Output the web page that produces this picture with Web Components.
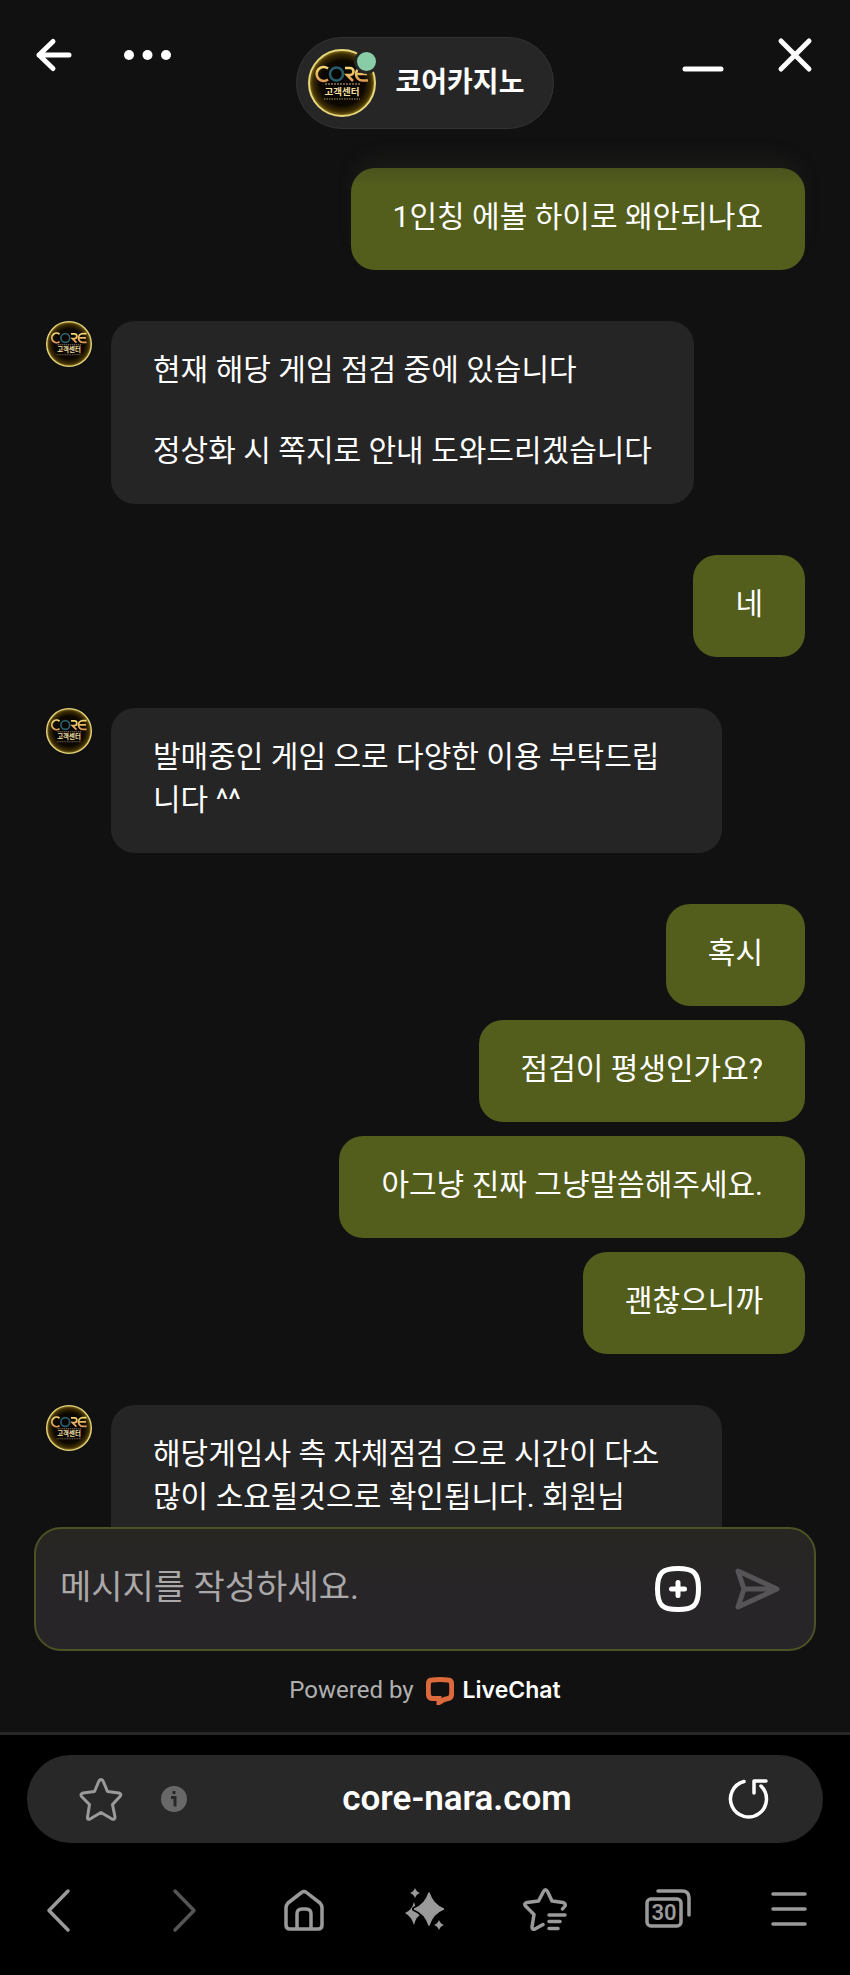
<!DOCTYPE html>
<html lang="ko">
<head>
<meta charset="utf-8">
<meta name="viewport" content="width=device-width, initial-scale=1">
<title>코어카지노</title>
<style>
    html, body {
        margin: 0;
        height: 100%;
        background: #000;
    }
    body {
        font-family: Roboto, "Noto Sans CJK KR", sans-serif;
        color: #fff;
        display: flex;
        flex-direction: column;
    }
</style>
</head>
<body>
<chat-window>
    <chat-header slot="header">코어카지노</chat-header>
    <chat-group from="user">
        <chat-bubble from="user" glow>1인칭 에볼 하이로 왜안되나요</chat-bubble>
    </chat-group>
    <chat-group from="agent">
        <chat-bubble><p>현재 해당 게임 점검 중에 있습니다</p><p>정상화 시 쪽지로 안내 도와드리겠습니다</p></chat-bubble>
    </chat-group>
    <chat-group from="user">
        <chat-bubble from="user">네</chat-bubble>
    </chat-group>
    <chat-group from="agent">
        <chat-bubble>발매중인 게임 으로 다양한 이용 부탁드립니다 ^^</chat-bubble>
    </chat-group>
    <chat-group from="user">
        <chat-bubble from="user">혹시</chat-bubble>
        <chat-bubble from="user">점검이 평생인가요?</chat-bubble>
        <chat-bubble from="user">아그냥 진짜 그냥말씀해주세요.</chat-bubble>
        <chat-bubble from="user">괜찮으니까</chat-bubble>
    </chat-group>
    <chat-group from="agent">
        <chat-bubble>해당게임사 측 자체점검 으로 시간이 다소 많이 소요될것으로 확인됩니다. 회원님</chat-bubble>
    </chat-group>
    <chat-composer slot="footer"></chat-composer>
    <powered-by slot="footer"></powered-by>
</chat-window>
<browser-bar url="core-nara.com" tabs="30"></browser-bar>

<script>
const buttonStyle = `
    button {
        display: grid;
        place-items: center;
        padding: 0;
        border: 0;
        background: none;
        color: inherit;
        cursor: pointer;
    }
    svg {
        display: block;
        fill: none;
        stroke: currentColor;
        stroke-linecap: round;
        stroke-linejoin: round;
    }
`;

class ChatAvatar extends HTMLElement {
    constructor() {
        super();
        this.attachShadow({ mode: "open" });
        this.shadowRoot.innerHTML = `
            <style>
                :host {
                    display: block;
                    flex: none;
                    width: var(--avatar-size, 46px);
                    height: var(--avatar-size, 46px);
                }
                svg { display: block; width: 100%; height: 100%; }
                text { font-family: "Noto Sans CJK KR", sans-serif; font-weight: 700; }
            </style>
            <svg viewBox="0 0 68 68" role="img" aria-label="CORE 고객센터">
                <defs>
                    <radialGradient id="disc">
                        <stop offset="0" stop-color="#050300"/>
                        <stop offset=".68" stop-color="#0d0800"/>
                        <stop offset=".88" stop-color="#3d2d04"/>
                        <stop offset="1" stop-color="#8a741c"/>
                    </radialGradient>
                    <linearGradient id="gold" x1="0" y1="0" x2="0" y2="1">
                        <stop offset="0" stop-color="#f5d873"/>
                        <stop offset="1" stop-color="#df9c58"/>
                    </linearGradient>
                </defs>
                <circle cx="34" cy="34" r="33" fill="url(#disc)" stroke="#e6d67c" stroke-width="2"/>
                <g fill="none" stroke="url(#gold)" stroke-width="2.6">
                    <path d="M20 19.500a7 7 0 1 0 0 11"/>
                    <path d="M37 19h5a3.500 3.500 0 0 1 0 7h-3l6 6"/>
                    <path d="M60 18.500h-5.500a6.500 6.500 0 0 0 0 13H60M49 25h10"/>
                </g>
                <circle cx="28.500" cy="25" r="6.500" fill="none" stroke="#285c6b" stroke-width="2.600"/>
                <path d="M17 35h35" stroke="#8a7658" stroke-width="1.500" stroke-dasharray="2 1"/>
                <text x="34" y="46" font-size="9.500" text-anchor="middle" fill="#f1dfa2">고객센터</text>
                <path d="M16 50h36" stroke="#75684e" stroke-width="1.500" stroke-dasharray="1.500 1"/>
            </svg>
        `;
    }
}

class ChatHeader extends HTMLElement {
    constructor() {
        super();
        this.attachShadow({ mode: "open" });
        this.shadowRoot.innerHTML = `
            <style>
                ${buttonStyle}
                :host {
                    display: grid;
                    grid-template-columns: 1fr auto 1fr;
                    align-items: start;
                    padding: 37px 32px 0;
                }
                .side { display: flex; gap: 50px; }
                .side.end { justify-content: flex-end; }
                .side button { height: 36px; }
                .pill {
                    display: flex;
                    align-items: center;
                    gap: 20px;
                    height: 92px;
                    padding: 0 29px 0 11px;
                    box-sizing: border-box;
                    border: 1px solid #333;
                    border-radius: 46px;
                    background: #262626;
                    font-size: 28px;
                    font-weight: 700;
                    line-height: 40px;
                    --avatar-size: 68px;
                }
                .photo { position: relative; }
                .status {
                    position: absolute;
                    top: 0;
                    right: -3px;
                    width: 19px;
                    height: 19px;
                    border: 3px solid #262626;
                    border-radius: 50%;
                    background: #88cda6;
                }
            </style>
            <div class="side">
                <button aria-label="뒤로">
                    <svg width="42" height="36" stroke-width="5"><path d="M37 18H7M21 4.500L7 18l14 13.500"/></svg>
                </button>
                <button aria-label="메뉴">
                    <svg width="48" height="36"><g fill="#fff" stroke="none"><circle cx="5" cy="18" r="5"/><circle cx="23.500" cy="18" r="5"/><circle cx="42" cy="18" r="5"/></g></svg>
                </button>
            </div>
            <div class="pill">
                <div class="photo"><chat-avatar></chat-avatar><span class="status"></span></div>
                <slot></slot>
            </div>
            <div class="side end">
                <button aria-label="최소화">
                    <svg width="42" height="36" stroke-width="5"><path d="M3 32h36"/></svg>
                </button>
                <button aria-label="닫기">
                    <svg width="44" height="36" stroke-width="5"><path d="M7 4l28 28M35 4L7 32"/></svg>
                </button>
            </div>
        `;
    }
}

class ChatBubble extends HTMLElement {
    constructor() {
        super();
        this.attachShadow({ mode: "open" });
        this.shadowRoot.innerHTML = `
            <style>
                :host {
                    display: block;
                    box-sizing: border-box;
                    max-width: 611px;
                    padding: 27px 42px 32px;
                    border-radius: 24px;
                    background: #262526;
                    font-size: 30px;
                    line-height: 43px;
                }
                :host([from="user"]) { background: #535d1c; }
                :host([glow]) {
                    background: linear-gradient(#4a531d, #535d1c 18px);
                    box-shadow: 0 -16px 24px -8px rgba(83, 93, 60, .14);
                }
                slot {
                    display: flex;
                    flex-direction: column;
                    gap: 38px;
                }
                ::slotted(p) { margin: 0; }
            </style>
            <slot></slot>
        `;
    }
}

class ChatGroup extends HTMLElement {
    constructor() {
        super();
        this.attachShadow({ mode: "open" });
        const agent = this.getAttribute("from") === "agent";
        this.shadowRoot.innerHTML = `
            <style>
                :host {
                    display: flex;
                    gap: 19px;
                }
                .messages {
                    display: flex;
                    flex: 1;
                    flex-direction: column;
                    align-items: ${agent ? "flex-start" : "flex-end"};
                    gap: 14px;
                }
            </style>
            ${agent ? "<chat-avatar></chat-avatar>" : ""}
            <div class="messages"><slot></slot></div>
        `;
    }
}

class ChatWindow extends HTMLElement {
    constructor() {
        super();
        this.attachShadow({ mode: "open" });
        this.shadowRoot.innerHTML = `
            <style>
                :host {
                    display: flex;
                    flex: 1;
                    flex-direction: column;
                    min-height: 0;
                    background: #121112;
                    border-bottom: 3px solid #272727;
                }
                main {
                    display: flex;
                    flex: 1;
                    flex-direction: column;
                    gap: 51px;
                    min-height: 0;
                    overflow: hidden;
                    padding: 39px 45px 0 46px;
                }
                ::slotted(chat-group) { flex: none; }
            </style>
            <slot name="header"></slot>
            <main><slot></slot></main>
            <slot name="footer"></slot>
        `;
    }
}

class ChatComposer extends HTMLElement {
    constructor() {
        super();
        this.attachShadow({ mode: "open" });
        this.shadowRoot.innerHTML = `
            <style>
                ${buttonStyle}
                :host { display: block; padding: 0 34px; }
                form {
                    display: flex;
                    align-items: center;
                    gap: 34px;
                    height: 124px;
                    box-sizing: border-box;
                    padding: 0 34px 0 24px;
                    border: 2px solid #4c5224;
                    border-radius: 27px;
                    background: linear-gradient(#272622, #272527 50%);
                }
                input {
                    flex: 1;
                    min-width: 0;
                    padding: 0 0 4px;
                    border: 0;
                    outline: 0;
                    background: none;
                    color: #fff;
                    font: 34px/48px Roboto, "Noto Sans CJK KR", sans-serif;
                }
                input::placeholder { color: #aaa8a9; opacity: 1; }
                .send { color: #565456; }
            </style>
            <form>
                <input type="text" aria-label="메시지" placeholder="메시지를 작성하세요.">
                <button type="button" aria-label="첨부">
                    <svg width="46" height="46" stroke-width="5"><path d="M23 2.500c15 0 20.500 3.500 20.500 20.500S38 43.500 23 43.500 2.500 40 2.500 23 8 2.500 23 2.500z"/><path d="M23 16.500v13M16.500 23h13"/></svg>
                </button>
                <button type="button" class="send" aria-label="보내기">
                    <svg width="45" height="42" stroke-width="5"><path d="M3 3l39 18L3 39l6-18zM9 21h30"/></svg>
                </button>
            </form>
        `;
    }
}

class PoweredBy extends HTMLElement {
    constructor() {
        super();
        this.attachShadow({ mode: "open" });
        this.shadowRoot.innerHTML = `
            <style>
                :host {
                    display: flex;
                    align-items: center;
                    justify-content: center;
                    gap: 12px;
                    padding: 24px 0 26px;
                    font-family: Roboto, sans-serif;
                    font-size: 24px;
                    line-height: 31px;
                    color: #b0b0b0;
                }
                a {
                    display: flex;
                    align-items: center;
                    gap: 9px;
                    color: #fff;
                    font-family: Inter, sans-serif;
                    font-size: 23px;
                    font-weight: 600;
                    text-decoration: none;
                }
            </style>
            <span>Powered by</span>
            <a href="#">
                <svg width="28" height="28" fill="none" stroke="#dc693b" stroke-width="5"><path d="M6 3Q14 2 22 3Q25 3 25.500 6Q26 12 25.500 18Q25 21 22 21.500L18 22.500L13 25.500V21.500L6 21.500Q3 21 2.500 18Q2 12 2.500 6Q3 3 6 3z"/></svg>
                LiveChat
            </a>
        `;
    }
}

class BrowserBar extends HTMLElement {
    constructor() {
        super();
        this.attachShadow({ mode: "open" });
        const url = this.getAttribute("url");
        const tabs = this.getAttribute("tabs");
        this.shadowRoot.innerHTML = `
            <style>
                ${buttonStyle}
                :host {
                    display: block;
                    flex: none;
                    padding: 20px 0 40px;
                    background: #000;
                    color: #9a9a9a;
                }
                .address {
                    display: grid;
                    grid-template-columns: auto 1fr auto;
                    align-items: center;
                    height: 88px;
                    margin: 0 27px;
                    padding: 0 52px;
                    border-radius: 44px;
                    background: #282828;
                }
                .left { display: flex; align-items: center; gap: 38px; }
                .reload { color: #fff; }
                .url {
                    color: #fff;
                    font-size: 35px;
                    font-weight: 600;
                    line-height: 44px;
                    text-align: center;
                }
                nav {
                    display: grid;
                    grid-template-columns: repeat(7, 1fr);
                    margin-top: 44px;
                }
                nav button { height: 48px; }
                .off { color: #555; }
                text { font: 600 22px Roboto, sans-serif; fill: currentColor; stroke: none; }
            </style>
            <div class="address">
                <div class="left">
                    <button aria-label="북마크">
                        <svg width="44" height="44" stroke-width="3"><path d="M22 2.500Q23.500 2.500 24.500 5L28.500 14.500L40 16Q43 17 41 19.500L33.500 27.500L36 40Q36 43 33 42L22 35.500L11 42Q8 43 8.500 40L10.500 27.500L2.500 19.500Q1 17 4 16L15.500 14.500L19.500 5Q20.500 2.500 22 2.500z"/></svg>
                    </button>
                    <button aria-label="사이트 정보">
                        <svg width="26" height="26"><circle cx="13" cy="13" r="13" fill="#686868" stroke="none"/><path d="M10 11.500H14V20.500M11.500 6.500h3" stroke="#282828" stroke-width="3" stroke-linecap="butt" stroke-linejoin="miter"/></svg>
                    </button>
                </div>
                <span class="url">${url}</span>
                <button class="reload" aria-label="새로고침">
                    <svg width="44" height="42" stroke-width="3.500"><path d="M17 3.500A18 18 0 1 0 34 8M27 15V3h12"/></svg>
                </button>
            </div>
            <nav>
                <button aria-label="이전"><svg width="34" height="48" stroke-width="3.500"><path d="M24 4L5 23.500L24 43"/></svg></button>
                <button class="off" aria-label="다음"><svg width="34" height="48" stroke-width="3.500"><path d="M10 4l19 19.500L10 43"/></svg></button>
                <button aria-label="홈"><svg width="40" height="48" stroke-width="3.500"><path d="M17.500 5.500Q20 3.500 22.500 5.500L36 16Q38 18 38 21V38Q38 42 34 42H6Q2 42 2 38V21Q2 18 4 16zM13 42V27q0-5 5-5h4q5 0 5 5v15"/></svg></button>
                <button aria-label="AI"><svg width="42" height="48"><g fill="currentColor" stroke="none"><path d="M10 15q2 9 9 11q-7 3-9 12q-3-9-9-12q7-3 9-11z"/><path d="M25 6Q29 18 39.500 22Q29 26 25 38Q21 26 10.500 22Q21 18 25 6z" stroke="#000" stroke-width="5"/><path d="M25 6Q29 18 39.500 22Q29 26 25 38Q21 26 10.500 22Q21 18 25 6z" stroke="currentColor" stroke-width="1.500"/><path d="M11 1q1.500 4 5 5q-3.500 1-5 5q-1.500-4-5-5q3.500-1 5-5zM35 33q1.500 4 5 5q-3.500 1-5 5q-1.500-4-5-5q3.500-1 5-5z"/></g></svg></button>
                <button aria-label="북마크 목록"><svg width="46" height="48" stroke-width="3.500"><path d="M39.500 22L42 19Q43 16.500 40 15.500L29 14L24.500 4.500Q22.500 1 20.500 4.500L15.500 14L4 15.500Q.500 16.500 2.500 19L11 27.500L9 40Q9 43 12 42L20 37.500M26 28h16M26 34.500h11M26 41.500h9"/></svg></button>
                <button aria-label="탭"><svg width="46" height="48" stroke-width="3.500"><rect x="2" y="12" width="34" height="27" rx="4"/><path d="M13 4h24q7 0 7 7v17"/><text x="19" y="33" text-anchor="middle">${tabs}</text></svg></button>
                <button aria-label="더보기"><svg width="36" height="48" stroke-width="3.500"><path d="M2 7h32M2 22h32M2 37h32"/></svg></button>
            </nav>
        `;
    }
}

customElements.define("chat-avatar", ChatAvatar);
customElements.define("chat-header", ChatHeader);
customElements.define("chat-bubble", ChatBubble);
customElements.define("chat-group", ChatGroup);
customElements.define("chat-window", ChatWindow);
customElements.define("chat-composer", ChatComposer);
customElements.define("powered-by", PoweredBy);
customElements.define("browser-bar", BrowserBar);
</script>
</body>
</html>
